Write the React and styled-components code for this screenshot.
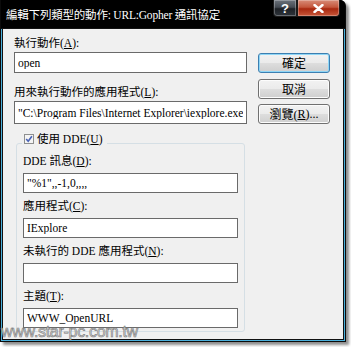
import React from 'react';
import styled, { createGlobalStyle } from 'styled-components';

const GlobalStyle = createGlobalStyle`
  html, body {
    margin: 0;
    padding: 0;
    background: #fff;
  }
  body {
    font-family: "Liberation Serif", "Noto Sans CJK TC", serif;
  }
`;

const Page = styled.div`
  position: relative;
  width: 351px;
  height: 347px;
  overflow: hidden;
`;

const Window = styled.div`
  width: 346px;
  height: 342px;
  box-sizing: border-box;
  padding: 0 1px 1px 1px;
  background: #0b0b0b;
  border-radius: 0 6px 0 0;
  box-shadow: 3px 3px 3px rgba(0, 0, 0, 0.45);
  display: flex;
  flex-direction: column;
`;

const TitleBar = styled.div`
  height: 28px;
  flex: 0 0 28px;
  display: flex;
  align-items: flex-start;
  padding-left: 5px;
  background: #000;
  border-radius: 0 5px 0 0;
`;

const TitleText = styled.div`
  padding-top: 8px;
  font-size: 11.5px;
  line-height: 14px;
  color: #fff;
  white-space: nowrap;
  letter-spacing: -0.2px;
`;

const CaptionButtons = styled.div`
  display: flex;
  margin-left: auto;
  margin-right: 5px;
`;

const CaptionButton = styled.div`
  width: ${({ $w }) => $w}px;
  height: 17px;
  box-sizing: border-box;
  display: flex;
  align-items: center;
  justify-content: center;
  border: 1px solid #1a1a1a;
  border-top: none;
  border-radius: ${({ $close }) => ($close ? '0 0 4px 0' : '0 0 0 4px')};
  background: ${({ $close }) =>
    $close
      ? 'linear-gradient(#d88c78 0%, #c4563c 45%, #a8280f 55%, #c8583a 100%)'
      : 'linear-gradient(#6c737c 0%, #454b53 45%, #1d2126 55%, #2f353c 100%)'};
  box-shadow: inset 0 0 0 1px rgba(255, 255, 255, 0.28);
  color: #fff;
  font-family: "Liberation Sans", sans-serif;
  font-weight: bold;
  font-size: 13px;
`;

const Client = styled.div`
  flex: 1;
  margin: 0 1px 1px 1px;
  border: 1px solid #111;
  background: #f0f0f0;
  box-shadow: 1px 1px 0 0 #4ab0dc, -1px 1px 0 0 #4ab0dc;
  padding: 7px 13px 0 11px;
  display: grid;
  grid-template-columns: 233px 72px;
  column-gap: 11px;
  align-items: start;
`;

const LeftColumn = styled.div`
  display: flex;
  flex-direction: column;
`;

const Label = styled.div`
  margin: ${({ $top }) => $top}px 0 ${({ $bottom }) => $bottom}px;
  font-size: 11.5px;
  line-height: 14px;
  color: #000;
  white-space: nowrap;
`;

const Key = styled.span`
  text-decoration: underline;
  text-underline-offset: 1px;
`;

const TextBox = styled.input`
  display: block;
  width: 100%;
  height: ${({ $h }) => $h}px;
  box-sizing: border-box;
  margin: 0;
  padding: 0 3px;
  border: 1px solid #6a6a6a;
  background: #fff;
  color: #000;
  font-family: "Liberation Serif", "Noto Sans CJK TC", serif;
  font-size: 11.5px;
  outline: none;
`;

const Group = styled.div`
  position: relative;
  margin: 19px 2px 0 2px;
  padding: 4px 6px 3px 6px;
  border: 1px solid #d5dfe5;
  border-radius: 3px;
  display: flex;
  flex-direction: column;
`;

const Legend = styled.div`
  position: absolute;
  top: -12px;
  left: 5px;
  display: flex;
  align-items: center;
  gap: 3px;
  padding: 0 4px 0 2px;
  background: #f0f0f0;
  font-size: 11.5px;
  line-height: 14px;
  white-space: nowrap;
`;

const ButtonStack = styled.div`
  display: flex;
  flex-direction: column;
  gap: 5.5px;
  padding-top: 17px;
`;

const Button = styled.div`
  height: 20px;
  box-sizing: border-box;
  display: flex;
  align-items: center;
  justify-content: center;
  border: 1px solid ${({ $default }) => ($default ? '#3c7fb1' : '#707070')};
  border-radius: 3px;
  background: linear-gradient(#f2f2f2 0%, #ebebeb 48%, #dddddd 52%, #cfcfcf 100%);
  box-shadow: ${({ $default }) =>
    $default ? 'inset 0 0 0 1px #8fd6f6' : 'inset 0 0 0 1px #fcfcfc'};
  font-size: 12px;
  color: #000;
  white-space: nowrap;
`;

const Watermark = styled.div`
  position: absolute;
  left: 1px;
  top: 323px;
  font-family: "Liberation Sans", sans-serif;
  font-size: 16px;
  letter-spacing: -0.3px;
  color: #d4d4d4;
  -webkit-text-stroke: 0.6px #7c7c7c;
`;

const CheckBox = () => (
  <svg width="10" height="10" viewBox="0 0 10 10">
    <rect x="0.5" y="0.5" width="9" height="9" fill="#f4f4f4" stroke="#8e8f8f" />
    <path d="M2.2 5 L4.2 7.3 L7.9 2.2" fill="none" stroke="#4a63b5" strokeWidth="1.6" />
  </svg>
);

const CloseIcon = () => (
  <svg width="11" height="9" viewBox="0 0 11 9">
    <path d="M1.5 1 L9.5 8 M9.5 1 L1.5 8" stroke="#fff" strokeWidth="2.4" strokeLinecap="round" />
  </svg>
);

const ddeFields = [
  { label: 'DDE 訊息', key: 'D', value: '"%1",,-1,0,,,,' },
  { label: '應用程式', key: 'C', value: 'IExplore' },
  { label: '未執行的 DDE 應用程式', key: 'N', value: '' },
  { label: '主題', key: 'T', value: 'WWW_OpenURL' }
];

const App = () => {
  return (
    <Page>
      <GlobalStyle />
      <Window>
        <TitleBar>
          <TitleText>編輯下列類型的動作: URL:Gopher 通訊協定</TitleText>
          <CaptionButtons>
            <CaptionButton $w={24}>?</CaptionButton>
            <CaptionButton $w={43} $close>
              <CloseIcon />
            </CaptionButton>
          </CaptionButtons>
        </TitleBar>

        <Client>
          <LeftColumn>
            <Label $top={0} $bottom={2}>
              執行動作(<Key>A</Key>):
            </Label>
            <TextBox $h={21} readOnly defaultValue="open" />
            <Label $top={12} $bottom={2}>
              用來執行動作的應用程式(<Key>L</Key>):
            </Label>
            <TextBox
              $h={23}
              readOnly
              defaultValue={'"C:\\Program Files\\Internet Explorer\\iexplore.exe" -nohome'}
            />

            <Group>
              <Legend>
                <CheckBox />
                <span>
                  使用 DDE(<Key>U</Key>)
                </span>
              </Legend>
              {ddeFields.map(field => (
                <React.Fragment key={field.key}>
                  <Label $top={6} $bottom={5}>
                    {field.label}(<Key>{field.key}</Key>):
                  </Label>
                  <TextBox $h={20} readOnly defaultValue={field.value} />
                </React.Fragment>
              ))}
            </Group>
          </LeftColumn>

          <ButtonStack>
            <Button $default>確定</Button>
            <Button>取消</Button>
            <Button>
              瀏覽(<Key>R</Key>)...
            </Button>
          </ButtonStack>
        </Client>
      </Window>
      <Watermark>www.star-pc.com.tw</Watermark>
    </Page>
  );
};

export default App;
